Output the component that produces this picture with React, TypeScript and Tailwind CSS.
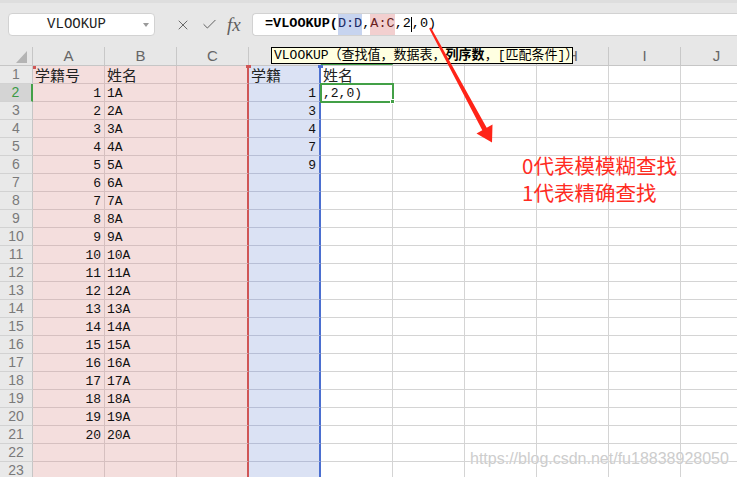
import { X, Check } from 'lucide-react'

const COLS = ['A', 'B', 'C', 'D', 'E', 'F', 'G', 'H', 'I', 'J']
const dList = [1, 3, 4, 7, 9]

type Cell = { text: string; right?: boolean; cjk?: boolean }

// 每一行的单元格内容
function getCell(row: number, col: string): Cell | null {
  if (col === 'A') {
    if (row === 1) return { text: '学籍号', cjk: true }
    if (row <= 21) return { text: String(row - 1), right: true }
  }
  if (col === 'B') {
    if (row === 1) return { text: '姓名', cjk: true }
    if (row <= 21) return { text: `${row - 1}A` }
  }
  if (col === 'D') {
    if (row === 1) return { text: '学籍', cjk: true }
    if (row <= 6) return { text: String(dList[row - 2]), right: true }
  }
  if (col === 'E') {
    if (row === 1) return { text: '姓名', cjk: true }
    if (row === 2) return { text: ',2,0)' }
  }
  return null
}

function cellClass(col: string) {
  if (col === 'A' || col === 'B') return 'bg-[#f4dedd] border-r border-b border-[#d6c0c0]'
  if (col === 'C') return 'bg-[#f4dedd] border-b border-b-[#d6c0c0] border-r-2 border-r-[#cf5656]'
  if (col === 'D') return 'bg-[#dbe2f4] border-b border-b-[#b8bfd6] border-r-2 border-r-[#4b6fd0]'
  return 'bg-white border-r border-b border-[#d4d4d4]'
}

export default function App() {
  const rows = Array.from({ length: 23 }, (_, i) => i + 1)

  return (
    <div className="relative w-[737px] h-[477px] overflow-hidden bg-white font-['Liberation_Sans',sans-serif]">
      {/* 工具栏 */}
      <div className="h-[44px] bg-[#e7e7e7] border-t-[3px] border-[#dedede] flex items-start pt-[10px]">
        <div className="ml-[8px] w-[147px] h-[23px] bg-white border border-[#d2d2d2] rounded-[4px] relative flex items-center justify-center">
          <span className="text-[14px] text-[#222] font-['Liberation_Mono',monospace] pr-[10px]">VLOOKUP</span>
          <span className="absolute right-[5px] top-[9px] w-0 h-0 border-l-[3px] border-r-[3px] border-t-[4px] border-l-transparent border-r-transparent border-t-[#9a9a9a]" />
        </div>
        <div className="w-[97px] h-[23px] flex items-center text-[#5f5f5f]">
          <X className="ml-[20px]" size={16} strokeWidth={1.4} />
          <Check className="ml-[10px]" size={17} strokeWidth={1.4} />
          <span className="ml-[9px] text-[19px] italic font-['Liberation_Serif',serif] leading-none">fx</span>
        </div>
        <div className="flex-1 h-[23px] bg-white border border-r-0 border-[#d2d2d2] rounded-l-[4px] flex items-center pl-[12px] text-[13.5px] font-['Liberation_Mono',monospace] text-black">
          <span className="font-bold">=VLOOKUP(</span>
          <span className="bg-[#c7d4ef] text-[#1c2a66]">D:D</span>
          <span>,</span>
          <span className="bg-[#f2cfcf] text-[#6a1f1f]">A:C</span>
          <span>,2</span>
          <span className="w-px h-[15px] bg-black" />
          <span>,0)</span>
        </div>
      </div>

      {/* 列标题 */}
      <div className="flex h-[22px] bg-[#e7e7e7] border-b border-[#c6c6c6]">
        <div className="w-[33px] shrink-0 border-r border-[#c6c6c6] relative mt-[3px]">
          <svg className="absolute left-[16px] top-[4px]" width="11" height="12" viewBox="0 0 11 12">
            <polygon points="11,0 11,12 0,12" fill="#b4b4b4" />
          </svg>
        </div>
        {COLS.map((c) => (
          <div
            key={c}
            className={`w-[72px] shrink-0 flex items-center justify-center text-[15px] text-[#666] mt-[3px] border-r border-[#c8c8c8] ${
              c === 'E' ? 'border-b-2 border-b-[#43a047]' : ''
            }`}
          >
            {c}
          </div>
        ))}
      </div>

      {/* 表格 */}
      <div>
        {rows.map((r) => (
          <div key={r} className="flex h-[18px]">
            <div
              className={`w-[33px] shrink-0 flex items-center justify-center text-[14px] border-b border-[#d2d2d2] ${
                r === 2
                  ? 'bg-[#d4d4d4] text-[#3c9a45] border-r-2 border-r-[#43a047]'
                  : 'bg-[#e9e9e9] text-[#7a7a7a] border-r border-r-[#c6c6c6]'
              }`}
            >
              {r}
            </div>
            {COLS.map((c) => {
              const cell = getCell(r, c)
              return (
                <div
                  key={c}
                  className={`w-[72px] shrink-0 flex items-center whitespace-nowrap ${cellClass(c)} ${
                    cell?.right ? 'justify-end pr-[3px]' : 'pl-[2px]'
                  }`}
                >
                  {cell &&
                    (cell.cjk ? (
                      <span className="text-[15px] leading-[17px] text-[#222] font-['Noto_Sans_CJK_SC',sans-serif]">
                        {cell.text}
                      </span>
                    ) : (
                      <span className="text-[13px] leading-none text-[#111] font-['Liberation_Mono',monospace] mt-[1px]">
                        {cell.text}
                      </span>
                    ))}
                </div>
              )
            })}
          </div>
        ))}
      </div>

      {/* 区域角标 */}
      <div className="absolute left-[33px] top-[66px] w-[3px] h-[3px] bg-[#cf5656]" />
      <div className="absolute left-[246px] top-[65px] w-[5px] h-[3px] bg-[#cf5656]" />
      <div className="absolute left-[318px] top-[65px] w-[5px] h-[3px] bg-[#4b6fd0]" />

      {/* 选中单元格 E2 */}
      <div className="absolute left-[320px] top-[83px] w-[74px] h-[20px] border-2 border-[#43a047] pointer-events-none" />
      <div className="absolute left-[390px] top-[99px] w-[5px] h-[5px] bg-[#43a047] border border-white" />

      {/* 函数提示 */}
      <div className="absolute left-[271px] top-[47px] w-[302px] h-[17px] bg-[#ffffe1] border border-black flex items-center pl-[2px] text-[13px] text-black font-['Liberation_Mono','Noto_Sans_CJK_SC',monospace] whitespace-nowrap leading-none">
        <span>VLOOKUP（查找值，数据表，</span>
        <span className="font-bold">列序数</span>
        <span>，[匹配条件]）</span>
      </div>

      {/* 红色箭头 */}
      <svg className="absolute left-0 top-0 pointer-events-none" width="737" height="477">
        <polygon
          points="430.9,27.5 486.7,127.8 492.5,124.5 492,142.5 476.5,133.5 482.3,130.2 429.1,28.5"
          fill="#ff2418"
        />
      </svg>

      {/* 说明文字 */}
      <div className="absolute left-[522px] top-[152px] text-[20.5px] leading-[27px] text-[#ff2b1f] font-['Noto_Sans_CJK_SC',sans-serif] whitespace-nowrap">
        <div>0代表模模糊查找</div>
        <div>1代表精确查找</div>
      </div>

      {/* 水印 */}
      <div className="absolute left-[470px] top-[447px] text-[16px] text-[#cdcdcd] whitespace-nowrap [text-shadow:0_0_2px_#ffffff]">
        https://blog.csdn.net/fu18838928050
      </div>
    </div>
  )
}
